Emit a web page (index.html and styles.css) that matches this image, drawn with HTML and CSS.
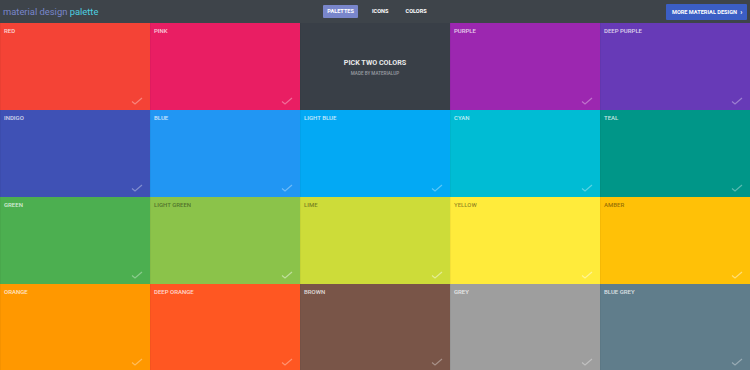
FILE: index.html
```html
<!DOCTYPE html>
<html>
<head>
<meta charset="utf-8">
<link rel="stylesheet" href="styles.css">
</head>
<body>
<header class="top">
  <div class="logo"><span class="l1">material design</span> <span class="l2">palette</span></div>
  <nav class="nav">
    <span class="nav-item active">PALETTES</span>
    <span class="nav-item">ICONS</span>
    <span class="nav-item">COLORS</span>
  </nav>
  <div class="right"><span class="more">MORE MATERIAL DESIGN <span class="chev">&#8250;</span></span></div>
</header>
<main class="grid">
  <div class="cell" style="background:#F44336"><span class="lbl">RED</span><svg class="chk" viewBox="0 0 12 8"><path d="M1 4.5 L4 7 L11 1"/></svg></div>
  <div class="cell" style="background:#E91E63"><span class="lbl">PINK</span><svg class="chk" viewBox="0 0 12 8"><path d="M1 4.5 L4 7 L11 1"/></svg></div>
  <div class="cell center"><div class="pick">PICK TWO COLORS</div><div class="made">MADE BY MATERIALUP</div></div>
  <div class="cell" style="background:#9C27B0"><span class="lbl">PURPLE</span><svg class="chk" viewBox="0 0 12 8"><path d="M1 4.5 L4 7 L11 1"/></svg></div>
  <div class="cell" style="background:#673AB7"><span class="lbl">DEEP PURPLE</span><svg class="chk" viewBox="0 0 12 8"><path d="M1 4.5 L4 7 L11 1"/></svg></div>

  <div class="cell" style="background:#3F51B5"><span class="lbl">INDIGO</span><svg class="chk" viewBox="0 0 12 8"><path d="M1 4.5 L4 7 L11 1"/></svg></div>
  <div class="cell" style="background:#2196F3"><span class="lbl">BLUE</span><svg class="chk" viewBox="0 0 12 8"><path d="M1 4.5 L4 7 L11 1"/></svg></div>
  <div class="cell" style="background:#03A9F4"><span class="lbl">LIGHT BLUE</span><svg class="chk" viewBox="0 0 12 8"><path d="M1 4.5 L4 7 L11 1"/></svg></div>
  <div class="cell" style="background:#00BCD4"><span class="lbl">CYAN</span><svg class="chk" viewBox="0 0 12 8"><path d="M1 4.5 L4 7 L11 1"/></svg></div>
  <div class="cell" style="background:#009688"><span class="lbl">TEAL</span><svg class="chk" viewBox="0 0 12 8"><path d="M1 4.5 L4 7 L11 1"/></svg></div>

  <div class="cell" style="background:#4CAF50"><span class="lbl">GREEN</span><svg class="chk" viewBox="0 0 12 8"><path d="M1 4.5 L4 7 L11 1"/></svg></div>
  <div class="cell dark" style="background:#8BC34A"><span class="lbl">LIGHT GREEN</span><svg class="chk" viewBox="0 0 12 8"><path d="M1 4.5 L4 7 L11 1"/></svg></div>
  <div class="cell dark" style="background:#CDDC39"><span class="lbl">LIME</span><svg class="chk" viewBox="0 0 12 8"><path d="M1 4.5 L4 7 L11 1"/></svg></div>
  <div class="cell dark" style="background:#FFEB3B"><span class="lbl">YELLOW</span><svg class="chk" viewBox="0 0 12 8"><path d="M1 4.5 L4 7 L11 1"/></svg></div>
  <div class="cell dark" style="background:#FFC107"><span class="lbl">AMBER</span><svg class="chk" viewBox="0 0 12 8"><path d="M1 4.5 L4 7 L11 1"/></svg></div>

  <div class="cell" style="background:#FF9800"><span class="lbl">ORANGE</span><svg class="chk" viewBox="0 0 12 8"><path d="M1 4.5 L4 7 L11 1"/></svg></div>
  <div class="cell" style="background:#FF5722"><span class="lbl">DEEP ORANGE</span><svg class="chk" viewBox="0 0 12 8"><path d="M1 4.5 L4 7 L11 1"/></svg></div>
  <div class="cell" style="background:#795548"><span class="lbl">BROWN</span><svg class="chk" viewBox="0 0 12 8"><path d="M1 4.5 L4 7 L11 1"/></svg></div>
  <div class="cell" style="background:#9E9E9E"><span class="lbl">GREY</span><svg class="chk" viewBox="0 0 12 8"><path d="M1 4.5 L4 7 L11 1"/></svg></div>
  <div class="cell" style="background:#607D8B"><span class="lbl">BLUE GREY</span><svg class="chk" viewBox="0 0 12 8"><path d="M1 4.5 L4 7 L11 1"/></svg></div>
</main>
</body>
</html>
```
FILE: styles.css
```css
html, body { margin: 0; padding: 0; }
body { font-family: Roboto, "Liberation Sans", Arial, sans-serif; background: #3c4248; overflow: hidden; }
.top {
  height: 23px;
  background: #3e444a;
  display: grid;
  grid-template-columns: 1fr auto 1fr;
  align-items: center;
  padding: 0 3px 0 3px;
  box-sizing: border-box;
}
.logo { font-size: 9.4px; line-height: 1; }
.l1 { color: #7986cb; }
.l2 { color: #4dd0e1; }
.nav { display: flex; align-items: center; gap: 9px; margin-left: 4px; }
.nav-item {
  color: #fff;
  font-size: 5.6px;
  font-weight: 700;
  padding: 4px 4px 4px;
  line-height: 5px;
}
.nav-item.active { background: #7986cb; border-radius: 1px; margin-right: 1px; }
.right { display: flex; justify-content: flex-end; }
.more {
  background: #3b5ec5;
  color: #fff;
  font-size: 5.6px;
  font-weight: 700;
  padding: 5px 6px 5px 6px;
  line-height: 6px;
  border-radius: 1px;
  width: 69px;
  white-space: nowrap;
}
.chev { margin-left: 2px; font-size: 7px; }
.grid {
  display: grid;
  grid-template-columns: repeat(5, 150px);
  grid-auto-rows: 87px;
}
.cell { position: relative; box-shadow: inset 1px 0 0 rgba(0,0,0,0.04); }
.lbl {
  display: block;
  padding: 4px 0 0 4px;
  font-size: 6px;
  font-weight: 500;
  color: rgba(255,255,255,0.78);
  line-height: 7px;
}
.dark .lbl { color: rgba(0,0,0,0.45); }
.chk {
  position: absolute;
  right: 7px;
  bottom: 5px;
  width: 12px;
  height: 8px;
  fill: none;
  stroke: rgba(255,255,255,0.35);
  stroke-width: 1.2;
}
.dark .chk { stroke: rgba(255,255,255,0.45); }
.center {
  background: #393f47;
  display: flex;
  flex-direction: column;
  align-items: center;
  justify-content: center;
  padding-top: 2px;
}
.pick { color: #e8e9ea; font-size: 7.2px; font-weight: 700; line-height: 8px; }
.made { color: #9a9ea3; font-size: 4.6px; font-weight: 500; margin-top: 4px; }
```
